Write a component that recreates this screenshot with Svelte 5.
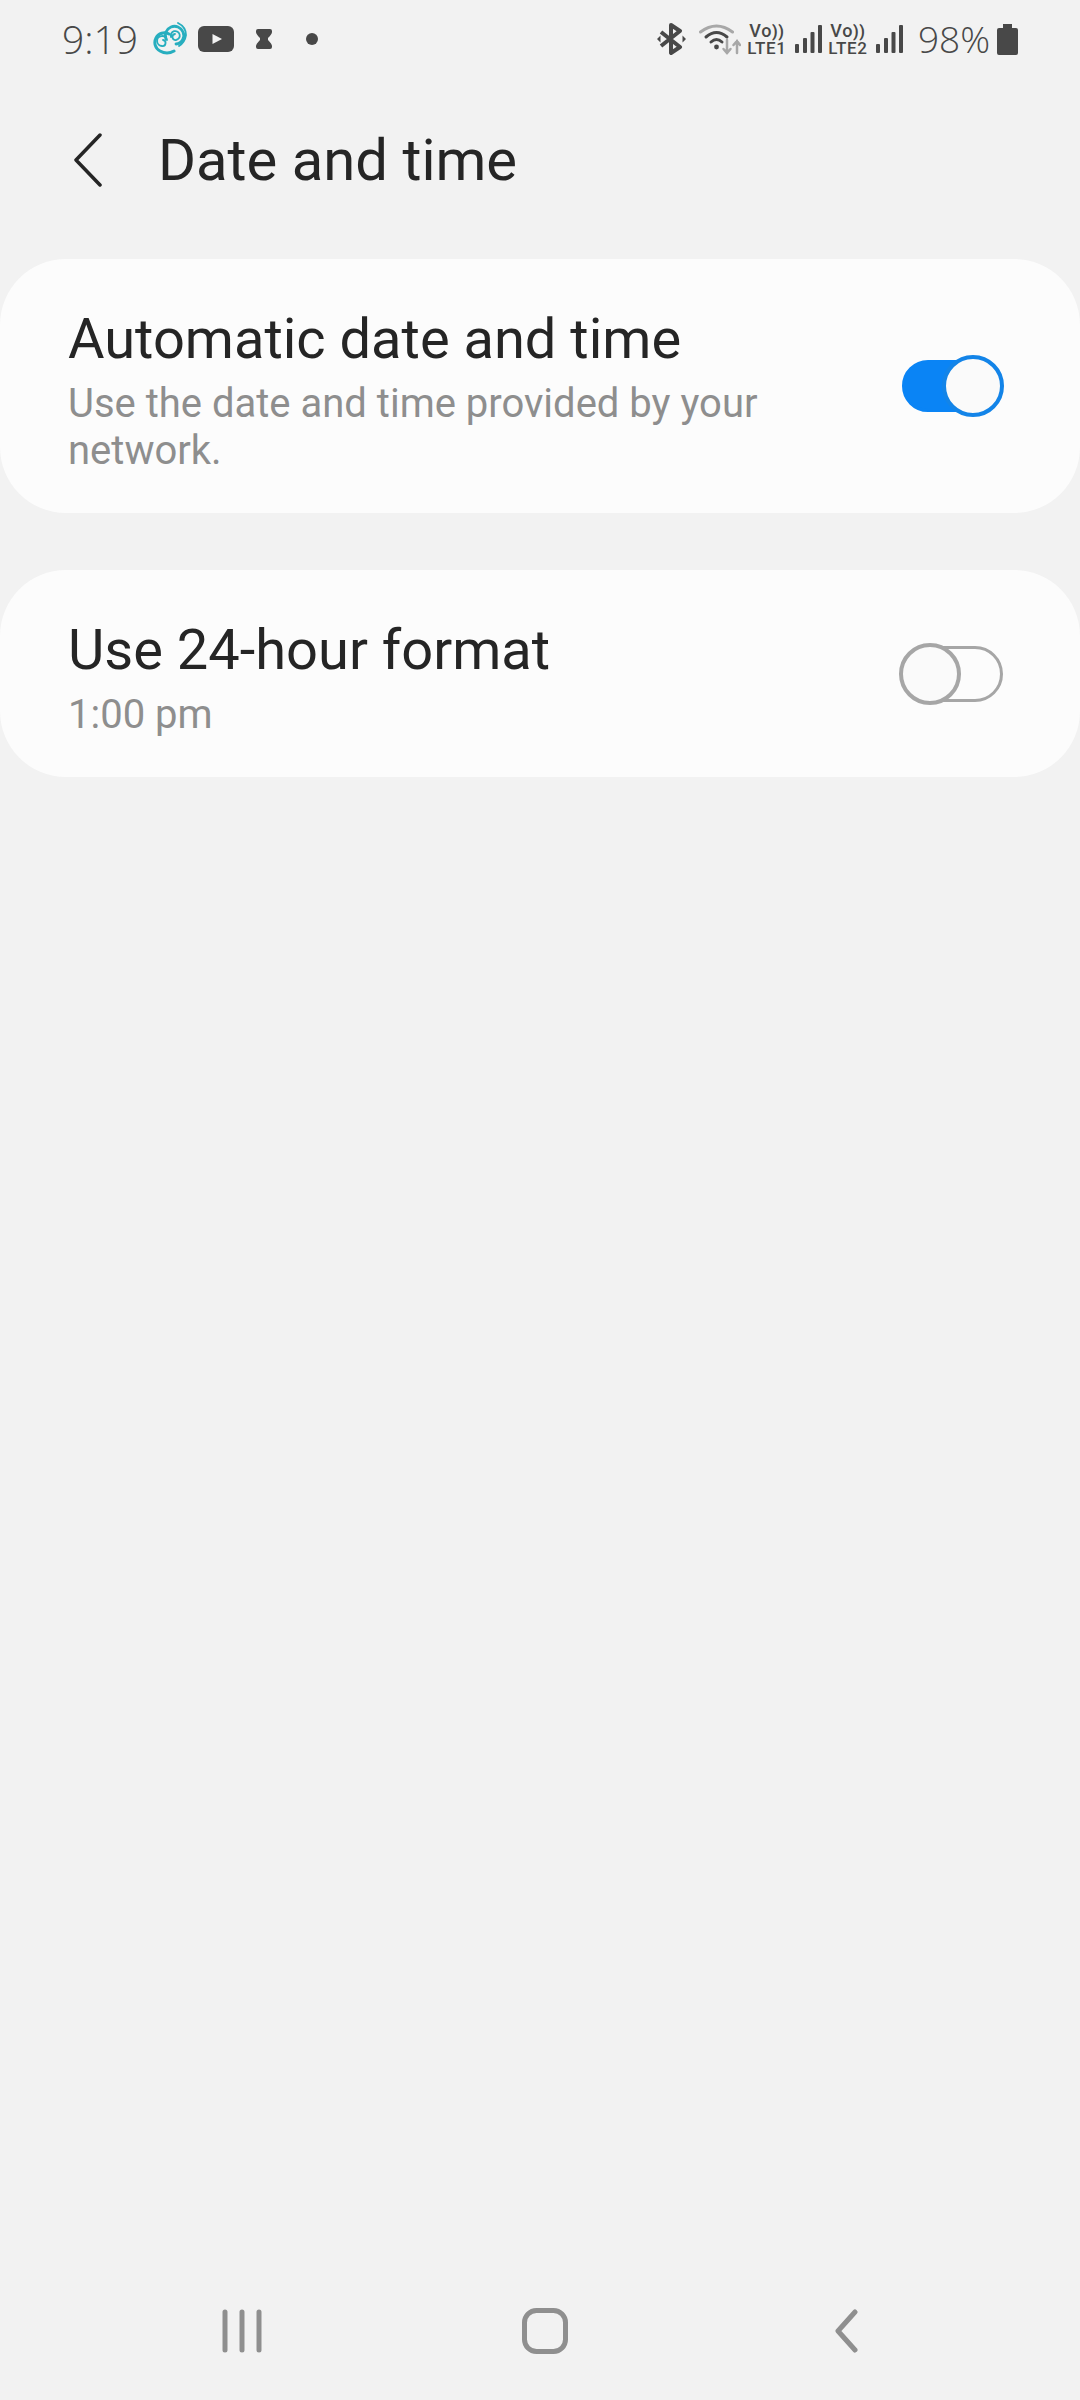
<script>
  let autoTime = true;
  let use24 = false;
</script>

<div class="screen">
  <div class="status">
    <div class="left">
      <span class="clock">9:19</span>
      <svg class="swirl" width="35" height="34" viewBox="0 0 35 34" fill="none" stroke="#27aebf" stroke-linecap="round">
        <path d="M17 12 A9 9 0 1 0 8 29 Q15 33 22 29" stroke-width="3"/>
        <path d="M15 18 A5 5 0 1 0 10 24 A3 3 0 0 0 11 18" stroke-width="1.800"/>
        <path d="M14 17 A9 9 0 0 1 31 10 A8.500 8.500 0 0 1 24 22" stroke-width="2.800"/>
        <path d="M19 15 A4.500 4.500 0 1 1 24 18 A2.800 2.800 0 0 1 23 12" stroke-width="1.800"/>
        <path d="M26 1 Q34 5 34 13 Q33 20 27 24" stroke-width="1.800"/>
      </svg>
      <svg class="yt" width="36" height="26" viewBox="0 0 36 26">
        <rect width="36" height="26" rx="6" fill="#484848"/>
        <path d="M14.500 8 L24 13 L14.500 18 Z" fill="#f2f2f2"/>
      </svg>
      <svg class="hour" width="16" height="20" viewBox="0 0 16 20">
        <path d="M2 0 H14 Q16 0 16 2 V3 Q16 5 12 9 V11 Q16 15 16 17 V18 Q16 20 14 20 H2 Q0 20 0 18 V17 Q0 15 4 11 V9 Q0 5 0 3 V2 Q0 0 2 0 Z" fill="#484848"/>
      </svg>
      <span class="dot"></span>
    </div>
    <div class="right">
      <svg class="bt" width="30" height="32" viewBox="0 0 30 32" fill="none" stroke="#484848">
        <path d="M4 9 L23 24 L14 30 V2 L23 8 L4 23" stroke-width="4" stroke-linejoin="round"/>
        <path d="M0 16 L3.500 12.500 V19.500 Z M29 16 L25.500 12.500 V19.500 Z" fill="#484848" stroke="none"/>
      </svg>
      <svg class="wifi" width="42" height="32" viewBox="0 0 42 32" fill="none" stroke-linecap="round">
        <path d="M1.500 9 Q17.500 -3 33.500 9" stroke="#a8a8a8" stroke-width="3"/>
        <path d="M7 14 Q17.500 5 28 14" stroke="#484848" stroke-width="3"/>
        <path d="M12 19 Q17.500 14 23 19" stroke="#484848" stroke-width="3"/>
        <circle cx="17.500" cy="24" r="2.400" fill="#484848"/>
        <path d="M28 17 V30 M24.500 26 L28 30 L31.500 26" stroke="#a8a8a8" stroke-width="2.500"/>
        <path d="M38 30 V18 M34.500 22 L38 18 L41 22" stroke="#a8a8a8" stroke-width="2.500"/>
      </svg>
      <div class="lte">
        <span class="vo">Vo<i>))</i></span>
        <span>LTE1</span>
      </div>
      <svg class="bars" width="27" height="30" viewBox="0 0 27 30" fill="#484848">
        <rect x="0" y="20" width="4" height="9" rx="1"/>
        <rect x="8" y="14" width="4" height="15" rx="1"/>
        <rect x="15.500" y="8" width="4" height="21" rx="1"/>
        <rect x="23" y="1" width="4" height="28" rx="1"/>
      </svg>
      <div class="lte">
        <span class="vo">Vo<i>))</i></span>
        <span>LTE2</span>
      </div>
      <svg class="bars" width="27" height="30" viewBox="0 0 27 30" fill="#484848">
        <rect x="0" y="20" width="4" height="9" rx="1"/>
        <rect x="8" y="14" width="4" height="15" rx="1"/>
        <rect x="15.500" y="8" width="4" height="21" rx="1"/>
        <rect x="23" y="1" width="4" height="28" rx="1"/>
      </svg>
      <span class="pct">98%</span>
      <svg class="batt" width="21" height="31" viewBox="0 0 21 31" fill="#484848">
        <path d="M6 0 H15 V4 H19 Q21 4 21 6 V29 Q21 31 19 31 H2 Q0 31 0 29 V6 Q0 4 2 4 H6 Z"/>
      </svg>
    </div>
  </div>

  <header class="bar">
    <svg class="back" width="30" height="54" viewBox="0 0 30 54" fill="none" stroke="#252525" stroke-width="3.500" stroke-linecap="round" stroke-linejoin="round">
      <path d="M27 2 L3 27 L27 52"/>
    </svg>
    <h1>Date and time</h1>
  </header>

  <section class="card first">
    <div class="copy">
      <div class="name">Automatic date and time</div>
      <div class="sub">Use the date and time provided by your network.</div>
    </div>
    <div class="toggle" class:on={autoTime}><span class="knob"></span></div>
  </section>

  <section class="card second">
    <div class="copy">
      <div class="name">Use 24-hour format</div>
      <div class="sub">1:00 pm</div>
    </div>
    <div class="toggle" class:on={use24}><span class="knob"></span></div>
  </section>

  <nav class="softkeys">
    <svg width="44" height="44" viewBox="0 0 44 44" stroke="#8f8f8f" stroke-width="5" stroke-linecap="round">
      <path d="M5 3 V41 M22 3 V41 M39 3 V41"/>
    </svg>
    <svg class="home" width="46" height="46" viewBox="0 0 46 46" fill="none" stroke="#8f8f8f" stroke-width="5">
      <rect x="2.500" y="2.500" width="41" height="41" rx="12"/>
    </svg>
    <svg class="prev" width="28" height="44" viewBox="0 0 28 44" fill="none" stroke="#8f8f8f" stroke-width="5" stroke-linecap="round" stroke-linejoin="round">
      <path d="M23 3 L6 22 L23 41"/>
    </svg>
  </nav>
</div>

<style>
  :global(body) {
    background: #f2f2f2;
  }

  .screen {
    width: 1080px;
    height: 2400px;
    background: #f2f2f2;
    display: flex;
    flex-direction: column;
    font-family: Roboto, sans-serif;
    color: #252525;
    overflow: hidden;
  }

  .status {
    height: 78px;
    padding: 0 62px;
    display: flex;
    align-items: center;
    justify-content: space-between;
    color: #484848;
  }

  .left,
  .right {
    display: flex;
    align-items: center;
  }

  .clock {
    font-family: "Open Sans", sans-serif;
    font-weight: 300;
    font-size: 39px;
    line-height: 40px;
    width: 90px;
  }

  .yt {
    margin-left: 11px;
  }

  .hour {
    margin-left: 22px;
  }

  .dot {
    width: 12px;
    height: 12px;
    margin-left: 34px;
    border-radius: 50%;
    background: #484848;
  }

  .wifi {
    margin-left: 12px;
  }

  .lte {
    display: flex;
    flex-direction: column;
    align-items: center;
    margin-left: 6px;
    font-weight: 500;
    font-size: 17px;
    line-height: 16px;
    letter-spacing: 0.6px;
    width: 40px;
  }

  .vo {
    font-size: 18px;
  }

  .vo i {
    font-style: normal;
    font-weight: 700;
    font-size: 16px;
  }

  .bars {
    margin-left: 8px;
  }

  .pct {
    font-family: "Open Sans", sans-serif;
    font-weight: 300;
    font-size: 37px;
    line-height: 40px;
    margin-left: 15px;
  }

  .batt {
    margin-left: 7px;
  }

  .bar {
    height: 83px;
    margin-top: 40px;
    display: flex;
    align-items: center;
    padding-left: 73px;
  }

  .bar h1 {
    margin: 0 0 0 55px;
    font-size: 58px;
    font-weight: 400;
    line-height: 64px;
  }

  .card {
    background: #fcfcfc;
    border-radius: 66px;
    display: flex;
    align-items: center;
    justify-content: space-between;
    padding: 0 77px 0 68px;
  }

  .first {
    height: 254px;
    margin-top: 58px;
  }

  .second {
    height: 207px;
    margin-top: 57px;
  }

  .copy {
    width: 720px;
    padding-top: 9px;
  }

  .name {
    font-size: 56px;
    line-height: 64px;
  }

  .sub {
    margin-top: 9px;
    font-size: 40px;
    line-height: 47px;
    color: #8e8e8e;
  }

  .toggle {
    position: relative;
    flex: none;
    width: 101px;
    height: 56px;
    box-sizing: border-box;
    border: 3px solid #a6a6a6;
    border-radius: 28px;
  }

  .toggle.on {
    height: 52px;
    background: #0a84f5;
    border-color: #0a84f5;
  }

  .knob {
    position: absolute;
    top: 50%;
    left: -6px;
    width: 62px;
    height: 62px;
    box-sizing: border-box;
    margin-top: -31px;
    border: 4px solid #a6a6a6;
    border-radius: 50%;
    background: #fafafa;
  }

  .on .knob {
    left: auto;
    right: -4px;
    border-color: #1384e8;
  }

  .softkeys {
    margin-top: auto;
    height: 92px;
    margin-bottom: 23px;
    padding-left: 220px;
    display: flex;
    align-items: center;
  }

  .home {
    margin-left: 258px;
  }

  .prev {
    margin-left: 264px;
  }
</style>
